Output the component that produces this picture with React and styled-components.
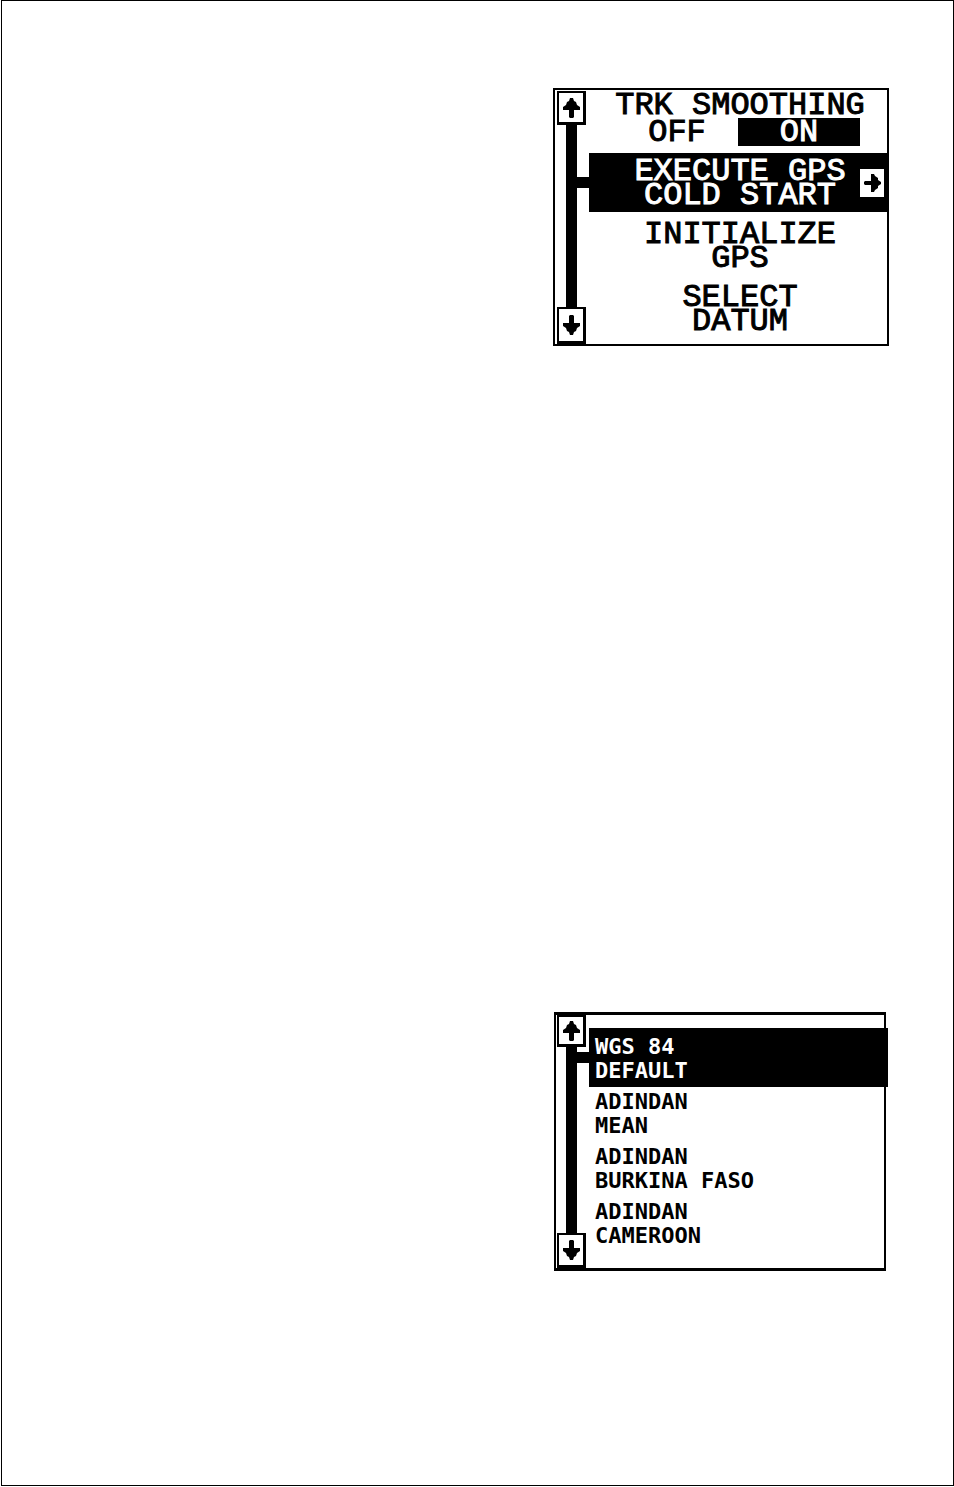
import { useState } from "react";
import styled, { createGlobalStyle } from "styled-components";

const GlobalStyle = createGlobalStyle`
  * {
    box-sizing: border-box;
  }
  body {
    margin: 0;
    background: #fff;
    color: #000;
  }
  button {
    border: none;
    padding: 0;
    margin: 0;
    background: none;
    color: inherit;
    font: inherit;
    cursor: pointer;
  }
`;

const Page = styled.main`
  min-height: calc(100vh - 1px);
  margin-left: 1px;
  padding: 87px 64px 87px 0;
  border: 1px solid #000;
  display: flex;
  flex-direction: column;
  align-items: flex-end;
  gap: 666px;
`;

const Screen = styled.section`
  display: flex;
  gap: 3px;
  width: 336px;
  padding-left: 2px;
  border: 2px solid #000;
`;

const DatumScreen = styled(Screen)`
  width: 332px;
  margin-right: 3px;
  padding-left: 1px;
  border-width: 3px 2px;
`;

const Rail = styled.div`
  width: 29px;
  display: flex;
  flex-direction: column;
  align-items: center;
  padding-top: ${(props) => props.$top}px;
`;

const RailButton = styled.button`
  width: 29px;
  height: ${(props) => props.$height}px;
  border: 2px solid #000;
  border-right-width: 3px;
  border-bottom-width: 3px;
  display: flex;
  justify-content: center;
  align-items: center;
`;

const Track = styled.div`
  flex: 1;
  width: 11px;
  background: #000;
  padding-top: ${(props) => props.$offset}px;
`;

// links the track to the highlighted entry
const Connector = styled.div`
  width: 24px;
  height: 11px;
  background: #000;
`;

const Menu = styled.div`
  flex: 1;
  min-width: 0;
  display: flex;
  flex-direction: column;
  gap: 4px;
  padding-bottom: 6px;
  font-family: "Liberation Mono", monospace;
  font-size: 32px;
  line-height: 24px;
  text-align: center;
  -webkit-text-stroke: 1px currentColor;
`;

const Setting = styled.div`
  padding: 4px 0 3px;
`;

const SettingTitle = styled.div`
  padding-left: 4px;
`;

const Choices = styled.div`
  display: grid;
  grid-template-columns: 122px 122px;
  justify-content: center;
`;

const Choice = styled.button`
  height: 28px;
  padding-top: 2px;
  color: ${(props) => (props.$active ? "#fff" : "#000")};
  background: ${(props) => (props.$active ? "#000" : "transparent")};
`;

const MenuItem = styled.button`
  width: 100%;
  padding: 7px 0 4px 4px;
  position: relative;
  color: ${(props) => (props.$active ? "#fff" : "#000")};
  background: ${(props) => (props.$active ? "#000" : "transparent")};
`;

const Line = styled.span`
  display: block;
`;

const EnterBadge = styled.span`
  position: absolute;
  right: 3px;
  top: 16px;
  width: 24px;
  height: 28px;
  background: #fff;
  display: flex;
  justify-content: center;
  align-items: center;
`;

const DatumList = styled.div`
  flex: 1;
  min-width: 0;
  padding: 13px 0 16px;
  font-family: "DejaVu Sans Mono", monospace;
  font-size: 22px;
  font-weight: bold;
  line-height: 24px;
`;

const Datum = styled.button`
  display: block;
  width: calc(100% + 4px);
  padding: ${(props) => (props.$active ? "7px" : "3px")} 6px 4px;
  text-align: left;
  position: relative;
  color: ${(props) => (props.$active ? "#fff" : "#000")};
  background: ${(props) => (props.$active ? "#000" : "transparent")};
`;

const UpArrow = () => (
  <svg width="17" height="20" viewBox="0 0 17 20" aria-hidden="true">
    <path d="M7 0h3l1 3 2 1 1 3 3 2v3h-6v7l-1 1H7l-1-1v-7H0V9l3-2 1-3 2-1z" />
  </svg>
);

const DownArrow = () => (
  <svg width="17" height="20" viewBox="0 0 17 20" aria-hidden="true">
    <path d="M7 20h3l1-3 2-1 1-3 3-2V8h-6V1l-1-1H7L6 1v7H0v3l3 2 1 3 2 1z" />
  </svg>
);

const RightArrow = () => (
  <svg width="17" height="20" viewBox="0 0 17 20" aria-hidden="true">
    <path d="M7 1h3l1 2 3 2v2l3 2v2l-3 2v2l-3 2-1 2H7v-7H1l-1-1V9l1-1h6z" />
  </svg>
);

const actions = [
  ["EXECUTE GPS", "COLD START"],
  ["INITIALIZE", "GPS"],
  ["SELECT", "DATUM"],
];

const datums = [
  ["WGS 84", "DEFAULT"],
  ["ADINDAN", "MEAN"],
  ["ADINDAN", "BURKINA FASO"],
  ["ADINDAN", "CAMEROON"],
];

function ScrollRail({ top, upHeight, downHeight, offset }) {
  return (
    <Rail $top={top}>
      <RailButton $height={upHeight} aria-label="Scroll up">
        <UpArrow />
      </RailButton>
      <Track $offset={offset}>
        <Connector />
      </Track>
      <RailButton $height={downHeight} aria-label="Scroll down">
        <DownArrow />
      </RailButton>
    </Rail>
  );
}

export default function App() {
  const [smoothing, setSmoothing] = useState("ON");

  return (
    <>
      <GlobalStyle />
      <Page>
        <Screen>
          <ScrollRail top={1} upHeight={34} downHeight={37} offset={52} />
          <Menu>
            <Setting>
              <SettingTitle>TRK SMOOTHING</SettingTitle>
              <Choices>
                {["OFF", "ON"].map((value) => (
                  <Choice
                    key={value}
                    $active={smoothing === value}
                    aria-pressed={smoothing === value}
                    onClick={() => setSmoothing(value)}
                  >
                    {value}
                  </Choice>
                ))}
              </Choices>
            </Setting>
            {actions.map(([first, second], index) => (
              <MenuItem key={first} $active={index === 0}>
                <Line>{first}</Line>
                <Line>{second}</Line>
                {index === 0 && (
                  <EnterBadge>
                    <RightArrow />
                  </EnterBadge>
                )}
              </MenuItem>
            ))}
          </Menu>
        </Screen>
        <DatumScreen>
          <ScrollRail top={0} upHeight={32} downHeight={35} offset={5} />
          <DatumList>
            {datums.map(([name, region], index) => (
              <Datum key={name + region} $active={index === 0}>
                <Line>{name}</Line>
                <Line>{region}</Line>
              </Datum>
            ))}
          </DatumList>
        </DatumScreen>
      </Page>
    </>
  );
}
